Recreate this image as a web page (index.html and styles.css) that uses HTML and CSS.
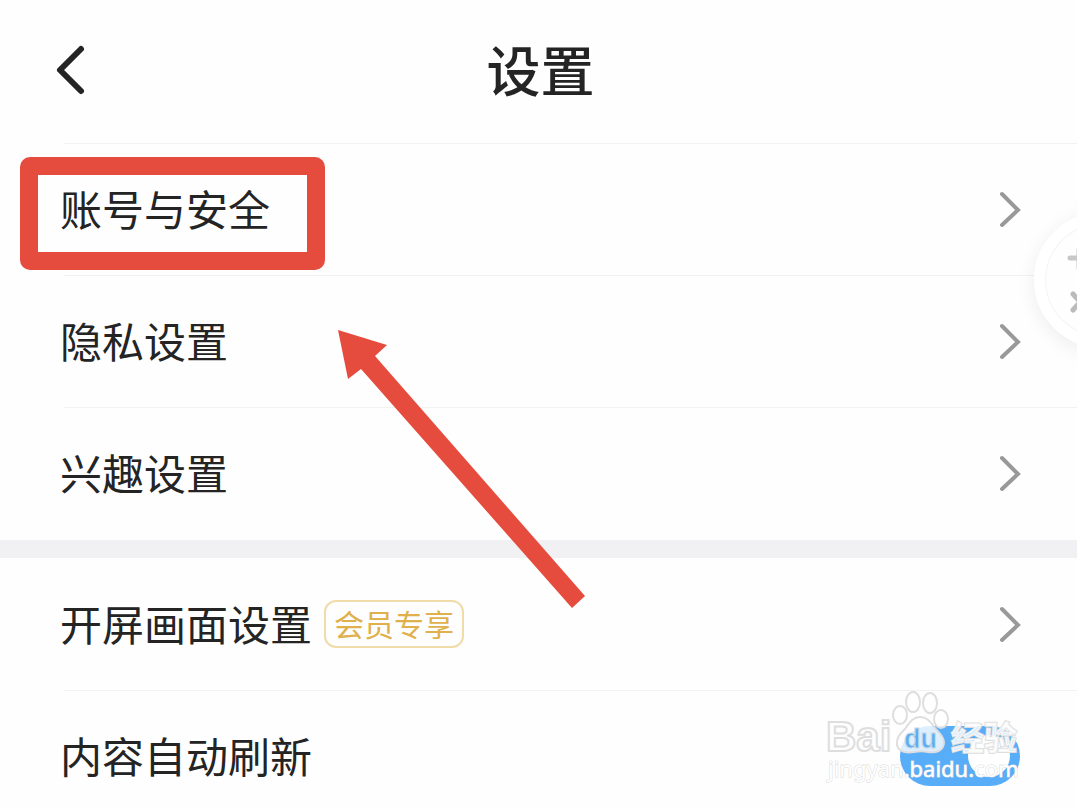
FILE: index.html
```html
<!DOCTYPE html>
<html lang="zh-CN">
<head>
<meta charset="utf-8">
<meta name="viewport" content="width=device-width, initial-scale=1">
<title>设置</title>
<link rel="stylesheet" href="styles.css">
</head>
<body>
<div class="app">
  <header class="header">
    <button class="back" type="button" aria-label="返回">
      <svg width="32" height="52" viewBox="0 0 32 52"><path d="M27 5 6 26 27 47"/></svg>
    </button>
    <h1 class="title">设置</h1>
  </header>
  <main>
    <ul class="group">
      <li class="row"><a class="link" href="#account"><span class="label">账号与安全</span><svg class="chevron" width="24" height="38" viewBox="0 0 24 38"><path d="M4 4 20 20 4 35"/></svg></a></li>
      <li class="row"><a class="link" href="#privacy"><span class="label">隐私设置</span><svg class="chevron" width="24" height="38" viewBox="0 0 24 38"><path d="M4 4 20 20 4 35"/></svg></a></li>
      <li class="row"><a class="link" href="#interest"><span class="label">兴趣设置</span><svg class="chevron" width="24" height="38" viewBox="0 0 24 38"><path d="M4 4 20 20 4 35"/></svg></a></li>
    </ul>
    <ul class="group group-next">
      <li class="row"><a class="link" href="#splash"><span class="label">开屏画面设置</span><span class="tag">会员专享</span><svg class="chevron" width="24" height="38" viewBox="0 0 24 38"><path d="M4 4 20 20 4 35"/></svg></a></li>
      <li class="row row-switch">
        <label class="link" for="refresh"><span class="label">内容自动刷新</span></label>
        <input class="switch" id="refresh" type="checkbox" role="switch" checked>
        <svg class="watermark" width="204" height="104" viewBox="820 686 204 104">
          <g class="mark">
            <text class="brand" x="826" y="751">Bai</text>
            <ellipse cx="900" cy="715" rx="7" ry="9"/>
            <ellipse cx="913" cy="702" rx="7" ry="10"/>
            <ellipse cx="930" cy="703" rx="7" ry="10"/>
            <ellipse cx="941" cy="719" rx="7" ry="9"/>
            <path d="M920 717C912 717 909 724 905 729C900 734 896 738 897 745C899 753 907 753 914 752C919 751 923 751 928 752C935 753 943 752 944 743C944 736 939 733 935 728C931 723 928 717 920 717Z"/>
            <text class="brand-cn" x="951" y="750">经验</text>
          </g>
          <text class="brand-du" x="904" y="748">du</text>
          <text class="site" x="828" y="777">jingyan.baidu.com</text>
        </svg>
      </li>
    </ul>
  </main>
  <div class="highlight"></div>
  <svg class="arrow" width="250" height="282" viewBox="336 328 250 282"><path d="M338 330 387 345 375 356 585 596 572 608 361 369 348 379Z"/></svg>
  <button class="float" type="button" aria-label="翻译">
    <svg width="60" height="80" viewBox="0 0 60 80"><path class="plus" d="M7 18H32M16 10V28"/><path class="cross" d="M10 54 24 70M24 54 10 70"/></svg>
  </button>
</div>
</body>
</html>
```
FILE: styles.css
```css
* { box-sizing: border-box; }

body {
  margin: 0;
  background: #fefefe;
  color: #242424;
  font-family: "Noto Sans CJK SC", sans-serif;
}

.app {
  position: relative;
  height: 100vh;
  overflow: hidden;
}

.header {
  display: grid;
  grid-template-columns: 100px 1fr 96px;
  align-items: center;
  height: 143px;
}

.back {
  display: flex;
  justify-content: flex-end;
  padding: 0 14px 4px 0;
  border: 0;
  background: none;
}

.back path {
  fill: none;
  stroke: #242424;
  stroke-width: 6;
  stroke-linecap: round;
  stroke-linejoin: round;
}

.title {
  margin: 0;
  padding-bottom: 6px;
  font-size: 54px;
  line-height: 80px;
  font-weight: 500;
  text-align: center;
}

.group {
  margin: 0;
  padding: 0 0 0 60px;
  list-style: none;
}

.group-next { border-top: 18px solid #f1f1f4; }

.row {
  position: relative;
  display: flex;
  align-items: center;
  height: 132px;
  padding-right: 55px;
  background: linear-gradient(#f2f2f2, #f2f2f2) 4px 0 / 100% 1px no-repeat;
}

.group-next .row:first-child { background: none; }
.group:first-child { padding-bottom: 1px; }

.link {
  display: flex;
  flex: 1;
  align-items: center;
  color: inherit;
  font-size: 42px;
  line-height: 60px;
  text-decoration: none;
}

.label { padding-bottom: 2px; }

.chevron { margin-left: auto; }

.chevron path {
  fill: none;
  stroke: #999;
  stroke-width: 4;
  stroke-linecap: round;
}

.tag {
  margin-left: 12px;
  padding: 0 8px 2px;
  border: 2px solid #efdca8;
  border-radius: 12px;
  color: #dfb04c;
  font-size: 30px;
  line-height: 42px;
}

.switch {
  display: flex;
  align-items: center;
  justify-content: flex-end;
  width: 120px;
  height: 60px;
  margin: 0 2px;
  padding: 0 10px;
  border-radius: 30px;
  background: #58adf8;
  appearance: none;
}

.switch::before {
  content: "";
  width: 42px;
  height: 42px;
  border-radius: 50%;
  background: #fff;
}

.watermark {
  position: absolute;
  top: -4px;
  right: 53px;
  pointer-events: none;
}

.mark {
  fill: #fff;
  fill-opacity: 0.8;
  stroke: #dedede;
  stroke-width: 2;
}

.brand {
  font: bold 42px "Liberation Sans", sans-serif;
}

.brand-cn {
  font-size: 33px;
  font-weight: 700;
  paint-order: stroke;
}

.brand-du {
  fill: #58adf8;
  stroke: #c8d8e4;
  stroke-width: 1;
  font: bold 27px "Liberation Sans", sans-serif;
}

.site {
  fill: #fff;
  stroke: #dadada;
  stroke-width: 1;
  paint-order: stroke;
  font: 22px "Noto Sans", sans-serif;
}

.highlight {
  position: absolute;
  top: 157px;
  left: 20px;
  width: 305px;
  height: 113px;
  border: 18px solid #e64c3d;
  border-radius: 10px;
}

.arrow {
  position: absolute;
  top: 328px;
  left: 336px;
}

.arrow path { fill: #e64c3d; }

.float {
  position: absolute;
  top: 212px;
  right: -93px;
  display: flex;
  align-items: center;
  width: 136px;
  height: 136px;
  padding: 0 0 0 18px;
  border: 11px solid #fff;
  border-radius: 50%;
  background: #fefefe;
  box-shadow: 0 4px 20px #00000012, inset 0 0 0 1px #f3f3f3;
}

.float path {
  fill: none;
  stroke: #c8c8c8;
  stroke-width: 5;
  stroke-linecap: round;
}

.float .cross { stroke: #bbb; }
```
